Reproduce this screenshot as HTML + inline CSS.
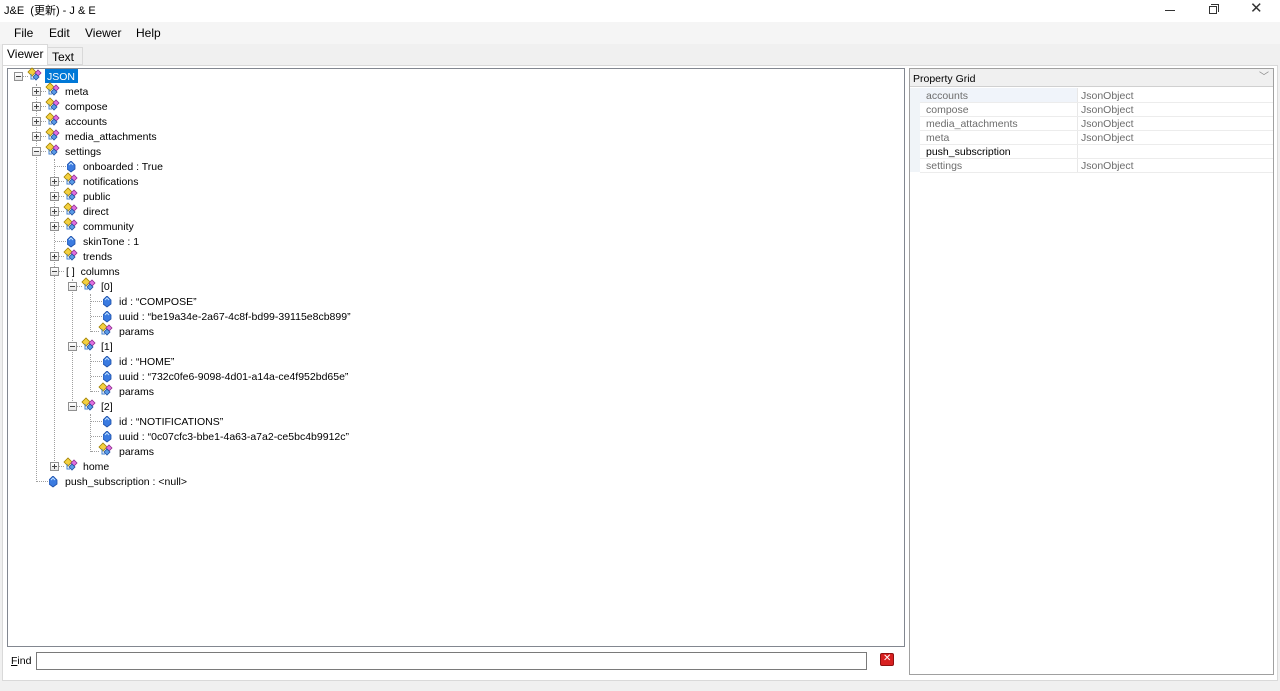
<!DOCTYPE html>
<html><head><meta charset="utf-8"><style>
*{margin:0;padding:0;box-sizing:border-box}
body{width:1280px;height:691px;position:relative;background:#f0f0f0;font-family:"Liberation Sans","Noto Sans CJK JP",sans-serif;font-size:11px;color:#000;overflow:hidden}
.a{position:absolute}
.t{position:absolute;white-space:nowrap;font-size:10.5px;line-height:14px;margin-top:1px}
.bx{position:absolute;width:9px;height:9px;border:1px solid #919191;background:linear-gradient(#fff,#e6e6e6)}
.bx:before{content:"";position:absolute;left:1px;top:3px;width:5px;height:1px;background:#444}
.bx.p:after{content:"";position:absolute;left:3px;top:1px;width:1px;height:5px;background:#444}
.vl{position:absolute;width:1px;border-left:1px dotted #a0a0a0}
.hl{position:absolute;height:1px;border-top:1px dotted #a0a0a0}
</style></head><body>
<svg width="0" height="0" style="position:absolute"><defs>
<g id="obj"><path d="M1 5 L5 1 L9 5 L5 9Z" fill="#f4d03f" stroke="#a08000" stroke-width="0.8"/><path d="M8 6 L11 3 L14 6 L11 9Z" fill="#e070e0" stroke="#903090" stroke-width="0.8"/><path d="M6 10 L9 7 L12 10 L9 13Z" fill="#5b9be8" stroke="#2050a0" stroke-width="0.8"/><path d="M4 7 V12 H7" fill="none" stroke="#4080d0" stroke-width="1"/></g>
<g id="leaf"><path d="M4 0 L8 4 L8 8 L4 11 L0 8 L0 4Z" fill="#3b7be0" stroke="#1d4fa8" stroke-width="0.8"/><path d="M2 4 L4 2 L6 4" fill="none" stroke="#bfe0ff" stroke-width="1"/></g>
</defs></svg>
<!-- title bar -->
<div class="a" style="left:0;top:0;width:1280px;height:22px;background:#fff"></div>
<div class="t" style="left:4px;top:3px;font-size:11px">J&amp;E &nbsp;(更新) - J &amp; E</div>
<div class="a" style="left:1165px;top:10px;width:10px;height:1px;background:#333"></div>
<div class="a" style="left:1209px;top:6px;width:8px;height:8px;border:1px solid #333"></div>
<div class="a" style="left:1211px;top:4px;width:8px;height:8px;border-top:1px solid #333;border-right:1px solid #333"></div>
<div class="t" style="left:1250px;top:1px;font-size:15px;color:#333">✕</div>
<!-- menu -->
<div class="a" style="left:0;top:22px;width:1280px;height:22px;background:#f5f5f5"></div>
<div class="t" style="left:14px;top:25px;font-size:12px">File</div>
<div class="t" style="left:49px;top:25px;font-size:12px">Edit</div>
<div class="t" style="left:85px;top:25px;font-size:12px">Viewer</div>
<div class="t" style="left:136px;top:25px;font-size:12px">Help</div>
<!-- tabs -->
<div class="a" style="left:47px;top:47px;width:36px;height:18px;background:#f0f0f0;border:1px solid #d9d9d9"></div>
<div class="t" style="left:52px;top:49px;font-size:12px">Text</div>
<div class="a" style="left:2px;top:44px;width:46px;height:22px;background:#fff;border:1px solid #d9d9d9;border-bottom:none"></div>
<div class="t" style="left:7px;top:46px;font-size:12px">Viewer</div>
<div class="a" style="left:2px;top:65px;width:1276px;height:616px;background:#fff;border:1px solid #d9d9d9"></div>
<!-- tree panel -->
<div class="a" style="left:7px;top:68px;width:898px;height:579px;border:1px solid #828790;background:#fff"></div>
<div class="vl" style="left:36px;top:84px;height:398px"></div>
<div class="vl" style="left:54px;top:159px;height:308px"></div>
<div class="vl" style="left:72px;top:279px;height:128px"></div>
<div class="vl" style="left:90px;top:294px;height:38px"></div>
<div class="vl" style="left:90px;top:354px;height:38px"></div>
<div class="vl" style="left:90px;top:414px;height:38px"></div>
<div class="bx" style="left:14px;top:72px"></div><div class="hl" style="left:23px;top:76px;width:5px"></div>
<svg class="a" style="left:27px;top:67px" width="16" height="15"><use href="#obj"/></svg>
<div class="a" style="left:45px;top:69px;width:33px;height:14px;background:#0078d7"></div>
<div class="t" style="left:47px;top:69px;color:#fff">JSON</div>
<div class="bx p" style="left:32px;top:87px"></div><div class="hl" style="left:41px;top:91px;width:5px"></div><svg class="a" style="left:45px;top:82px" width="16" height="15"><use href="#obj"/></svg><div class="t" style="left:65px;top:84px">meta</div>
<div class="bx p" style="left:32px;top:102px"></div><div class="hl" style="left:41px;top:106px;width:5px"></div><svg class="a" style="left:45px;top:97px" width="16" height="15"><use href="#obj"/></svg><div class="t" style="left:65px;top:99px">compose</div>
<div class="bx p" style="left:32px;top:117px"></div><div class="hl" style="left:41px;top:121px;width:5px"></div><svg class="a" style="left:45px;top:112px" width="16" height="15"><use href="#obj"/></svg><div class="t" style="left:65px;top:114px">accounts</div>
<div class="bx p" style="left:32px;top:132px"></div><div class="hl" style="left:41px;top:136px;width:5px"></div><svg class="a" style="left:45px;top:127px" width="16" height="15"><use href="#obj"/></svg><div class="t" style="left:65px;top:129px">media_attachments</div>
<div class="bx" style="left:32px;top:147px"></div><div class="hl" style="left:41px;top:151px;width:5px"></div><svg class="a" style="left:45px;top:142px" width="16" height="15"><use href="#obj"/></svg><div class="t" style="left:65px;top:144px">settings</div>
<div class="hl" style="left:55px;top:166px;width:11px"></div><svg class="a" style="left:67px;top:161px" width="9" height="12"><use href="#leaf"/></svg><div class="t" style="left:83px;top:159px">onboarded : True</div>
<div class="bx p" style="left:50px;top:177px"></div><div class="hl" style="left:59px;top:181px;width:5px"></div><svg class="a" style="left:63px;top:172px" width="16" height="15"><use href="#obj"/></svg><div class="t" style="left:83px;top:174px">notifications</div>
<div class="bx p" style="left:50px;top:192px"></div><div class="hl" style="left:59px;top:196px;width:5px"></div><svg class="a" style="left:63px;top:187px" width="16" height="15"><use href="#obj"/></svg><div class="t" style="left:83px;top:189px">public</div>
<div class="bx p" style="left:50px;top:207px"></div><div class="hl" style="left:59px;top:211px;width:5px"></div><svg class="a" style="left:63px;top:202px" width="16" height="15"><use href="#obj"/></svg><div class="t" style="left:83px;top:204px">direct</div>
<div class="bx p" style="left:50px;top:222px"></div><div class="hl" style="left:59px;top:226px;width:5px"></div><svg class="a" style="left:63px;top:217px" width="16" height="15"><use href="#obj"/></svg><div class="t" style="left:83px;top:219px">community</div>
<div class="hl" style="left:55px;top:241px;width:11px"></div><svg class="a" style="left:67px;top:236px" width="9" height="12"><use href="#leaf"/></svg><div class="t" style="left:83px;top:234px">skinTone : 1</div>
<div class="bx p" style="left:50px;top:252px"></div><div class="hl" style="left:59px;top:256px;width:5px"></div><svg class="a" style="left:63px;top:247px" width="16" height="15"><use href="#obj"/></svg><div class="t" style="left:83px;top:249px">trends</div>
<div class="bx" style="left:50px;top:267px"></div><div class="hl" style="left:59px;top:271px;width:5px"></div><div class="t" style="left:66px;top:264px">[ ] &nbsp;columns</div>
<div class="bx" style="left:68px;top:282px"></div><div class="hl" style="left:77px;top:286px;width:5px"></div><svg class="a" style="left:81px;top:277px" width="16" height="15"><use href="#obj"/></svg><div class="t" style="left:101px;top:279px">[0]</div>
<div class="hl" style="left:91px;top:301px;width:11px"></div><svg class="a" style="left:103px;top:296px" width="9" height="12"><use href="#leaf"/></svg><div class="t" style="left:119px;top:294px">id : “COMPOSE”</div>
<div class="hl" style="left:91px;top:316px;width:11px"></div><svg class="a" style="left:103px;top:311px" width="9" height="12"><use href="#leaf"/></svg><div class="t" style="left:119px;top:309px">uuid : “be19a34e-2a67-4c8f-bd99-39115e8cb899”</div>
<div class="hl" style="left:91px;top:331px;width:8px"></div><svg class="a" style="left:98px;top:322px" width="16" height="15"><use href="#obj"/></svg><div class="t" style="left:119px;top:324px">params</div>
<div class="bx" style="left:68px;top:342px"></div><div class="hl" style="left:77px;top:346px;width:5px"></div><svg class="a" style="left:81px;top:337px" width="16" height="15"><use href="#obj"/></svg><div class="t" style="left:101px;top:339px">[1]</div>
<div class="hl" style="left:91px;top:361px;width:11px"></div><svg class="a" style="left:103px;top:356px" width="9" height="12"><use href="#leaf"/></svg><div class="t" style="left:119px;top:354px">id : “HOME”</div>
<div class="hl" style="left:91px;top:376px;width:11px"></div><svg class="a" style="left:103px;top:371px" width="9" height="12"><use href="#leaf"/></svg><div class="t" style="left:119px;top:369px">uuid : “732c0fe6-9098-4d01-a14a-ce4f952bd65e”</div>
<div class="hl" style="left:91px;top:391px;width:8px"></div><svg class="a" style="left:98px;top:382px" width="16" height="15"><use href="#obj"/></svg><div class="t" style="left:119px;top:384px">params</div>
<div class="bx" style="left:68px;top:402px"></div><div class="hl" style="left:77px;top:406px;width:5px"></div><svg class="a" style="left:81px;top:397px" width="16" height="15"><use href="#obj"/></svg><div class="t" style="left:101px;top:399px">[2]</div>
<div class="hl" style="left:91px;top:421px;width:11px"></div><svg class="a" style="left:103px;top:416px" width="9" height="12"><use href="#leaf"/></svg><div class="t" style="left:119px;top:414px">id : “NOTIFICATIONS”</div>
<div class="hl" style="left:91px;top:436px;width:11px"></div><svg class="a" style="left:103px;top:431px" width="9" height="12"><use href="#leaf"/></svg><div class="t" style="left:119px;top:429px">uuid : “0c07cfc3-bbe1-4a63-a7a2-ce5bc4b9912c”</div>
<div class="hl" style="left:91px;top:451px;width:8px"></div><svg class="a" style="left:98px;top:442px" width="16" height="15"><use href="#obj"/></svg><div class="t" style="left:119px;top:444px">params</div>
<div class="bx p" style="left:50px;top:462px"></div><div class="hl" style="left:59px;top:466px;width:5px"></div><svg class="a" style="left:63px;top:457px" width="16" height="15"><use href="#obj"/></svg><div class="t" style="left:83px;top:459px">home</div>
<div class="hl" style="left:37px;top:481px;width:11px"></div><svg class="a" style="left:49px;top:476px" width="9" height="12"><use href="#leaf"/></svg><div class="t" style="left:65px;top:474px">push_subscription : &lt;null&gt;</div>
<!-- find -->
<div class="t" style="left:11px;top:653px"><u>F</u>ind</div>
<div class="a" style="left:36px;top:652px;width:831px;height:18px;border:1px solid #7a7a7a;background:#fff"></div>
<div class="a" style="left:880px;top:653px;width:14px;height:13px;background:#d82020;border:1px solid #901010;border-radius:2px"></div>
<div class="t" style="left:883px;top:652px;color:#fff;font-size:10px;line-height:12px">✕</div>
<!-- property grid -->
<div class="a" style="left:909px;top:68px;width:365px;height:607px;border:1px solid #a0a0a0;background:#fff"></div>
<div class="a" style="left:910px;top:69px;width:363px;height:18px;background:#f0f0f0;border-bottom:1px solid #d0d0d0"></div>
<div class="t" style="left:913px;top:71px">Property Grid</div>
<div class="t" style="left:1259px;top:70px;color:#888;font-size:10px">﹀</div>
<div class="a" style="left:910px;top:88px;width:10px;height:84px;background:#f0f4f8"></div>
<div class="a" style="left:1077px;top:88px;width:1px;height:84px;background:#e8e8e8"></div>
<div class="a" style="left:920px;top:102px;width:353px;height:1px;background:#ececec"></div>
<div class="a" style="left:920px;top:116px;width:353px;height:1px;background:#ececec"></div>
<div class="a" style="left:920px;top:130px;width:353px;height:1px;background:#ececec"></div>
<div class="a" style="left:920px;top:144px;width:353px;height:1px;background:#ececec"></div>
<div class="a" style="left:920px;top:158px;width:353px;height:1px;background:#ececec"></div>
<div class="a" style="left:920px;top:172px;width:353px;height:1px;background:#ececec"></div>
<div class="a" style="left:920px;top:88px;width:157px;height:14px;background:#f0f4fa"></div>
<div class="t" style="left:926px;top:88px;color:#6d6d6d">accounts</div><div class="t" style="left:1081px;top:88px;color:#6d6d6d">JsonObject</div>
<div class="t" style="left:926px;top:102px;color:#6d6d6d">compose</div><div class="t" style="left:1081px;top:102px;color:#6d6d6d">JsonObject</div>
<div class="t" style="left:926px;top:116px;color:#6d6d6d">media_attachments</div><div class="t" style="left:1081px;top:116px;color:#6d6d6d">JsonObject</div>
<div class="t" style="left:926px;top:130px;color:#6d6d6d">meta</div><div class="t" style="left:1081px;top:130px;color:#6d6d6d">JsonObject</div>
<div class="t" style="left:926px;top:144px">push_subscription</div>
<div class="t" style="left:926px;top:158px;color:#6d6d6d">settings</div><div class="t" style="left:1081px;top:158px;color:#6d6d6d">JsonObject</div>
</body></html>
